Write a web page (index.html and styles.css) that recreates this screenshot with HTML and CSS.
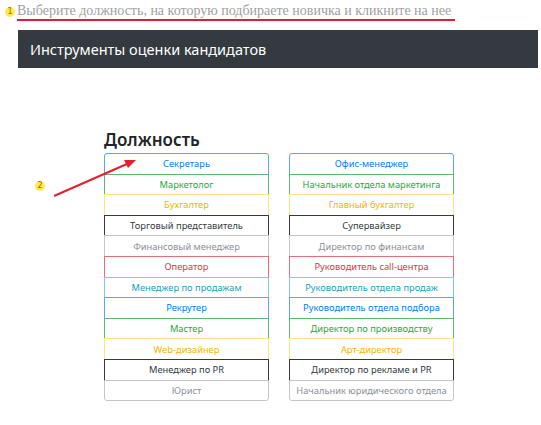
FILE: index.html
```html
<!DOCTYPE html>
<html lang="ru">
<head>
<meta charset="utf-8">
<link rel="stylesheet" href="styles.css">
</head>
<body>
<div class="hint">
  <span class="badge">1</span>
  <span class="hint-text">Выберите должность, на которую подбираете новичка и кликните на нее</span>
</div>
<div class="navbar">Инструменты оценки кандидатов</div>
<main class="content">
  <h2 class="title">Должность</h2>
  <div class="columns">
    <div class="list">
      <div class="item primary">Секретарь</div>
      <div class="item success">Маркетолог</div>
      <div class="item warning">Бухгалтер</div>
      <div class="item dark">Торговый представитель</div>
      <div class="item secondary">Финансовый менеджер</div>
      <div class="item danger">Оператор</div>
      <div class="item info">Менеджер по продажам</div>
      <div class="item primary">Рекрутер</div>
      <div class="item success">Мастер</div>
      <div class="item warning">Web-дизайнер</div>
      <div class="item dark">Менеджер по PR</div>
      <div class="item secondary">Юрист</div>
    </div>
    <div class="list">
      <div class="item primary">Офис-менеджер</div>
      <div class="item success">Начальник отдела маркетинга</div>
      <div class="item warning">Главный бухгалтер</div>
      <div class="item dark">Супервайзер</div>
      <div class="item secondary">Директор по финансам</div>
      <div class="item danger">Руководитель call-центра</div>
      <div class="item info">Руководитель отдела продаж</div>
      <div class="item primary">Руководитель отдела подбора</div>
      <div class="item success">Директор по производству</div>
      <div class="item warning">Арт-директор</div>
      <div class="item dark">Директор по рекламе и PR</div>
      <div class="item secondary">Начальник юридического отдела</div>
    </div>
  </div>
</main>
<span class="badge badge-two">2</span>
<svg class="arrow" width="541" height="425" viewBox="0 0 541 425">
  <line x1="54" y1="196" x2="128" y2="163.5" stroke="#e3202c" stroke-width="2"/>
  <polygon points="136,160 124,160 128,168" fill="#e3202c"/>
</svg>
</body>
</html>
```

FILE: styles.css
```css
html, body {
  margin: 0;
  padding: 0;
  background: #ffffff;
}
body {
  position: relative;
  width: 541px;
  height: 425px;
  overflow: hidden;
  font-family: "Noto Sans", "Open Sans", sans-serif;
  color: #212529;
}
.hint {
  display: flex;
  align-items: center;
  padding: 3px 0 0 5px;
  height: 17px;
}
.badge {
  display: inline-flex;
  align-items: center;
  justify-content: center;
  width: 10px;
  height: 10px;
  border-radius: 50%;
  background: #ffe94d;
  color: #a06a00;
  font-family: "DejaVu Sans", sans-serif;
  font-size: 8px;
  line-height: 1;
  margin-right: 3px;
}
.hint-text {
  font-family: "Liberation Serif", "DejaVu Serif", serif;
  font-size: 14px;
  color: #a0a0a0;
  border-bottom: 2px solid #e01a3c;
  padding-bottom: 0;
  line-height: 16px;
  padding-right: 4px;
  margin-left: -1px;
}
.navbar {
  margin: 10px 3px 0 18px;
  height: 38px;
  background: #343a40;
  color: #ffffff;
  display: flex;
  align-items: center;
  padding-left: 12px;
  font-size: 14.5px;
}
.content {
  padding: 62px 0 0 104px;
}
.title {
  margin: 0 0 3px 0;
  font-size: 17px;
  font-weight: 600;
  line-height: 20px;
  color: #212529;
}
.columns {
  display: flex;
  gap: 20px;
}
.list {
  width: 165px;
  display: flex;
  flex-direction: column;
}
.item {
  box-sizing: border-box;
  height: 21.6px;
  margin-top: -1px;
  border: 1px solid;
  display: flex;
  align-items: center;
  justify-content: center;
  font-size: 9.3px;
  white-space: nowrap;
  background: #fff;
}
.item:first-child {
  margin-top: 0;
  border-radius: 3px 3px 0 0;
}
.item:last-child {
  border-radius: 0 0 3px 3px;
}
.primary { color: #007bff; border-color: #5aa5f2; }
.success { color: #28a745; border-color: #5fb772; }
.warning { color: #f5b400; border-color: #ffe384; }
.dark { color: #343a40; border-color: #343a40; }
.secondary { color: #8a9096; border-color: #c4c7ca; }
.danger { color: #dc3545; border-color: #e1707b; }
.info { color: #17a2b8; border-color: #7cd0dc; }
.badge-two {
  position: absolute;
  left: 35px;
  top: 181px;
}
.arrow {
  position: absolute;
  left: 0;
  top: 0;
  pointer-events: none;
}
```
